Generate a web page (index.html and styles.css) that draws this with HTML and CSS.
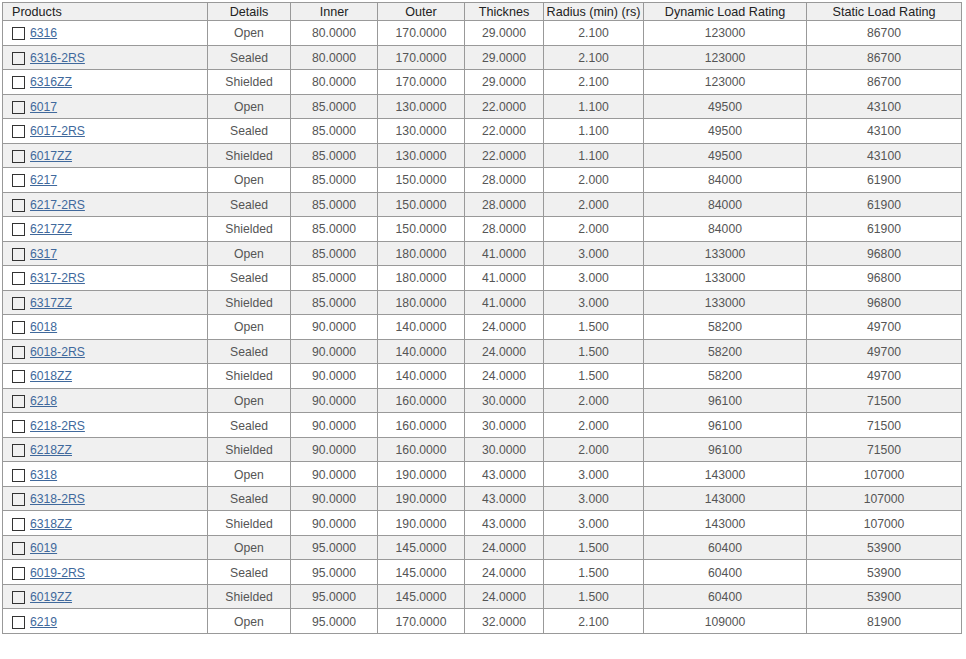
FILE: index.html
```html
<!DOCTYPE html>
<html>
<head>
<meta charset="utf-8">
<link rel="stylesheet" href="styles.css">
</head>
<body>
<table class="grid">
<colgroup>
<col class="c1"><col class="c2"><col class="c3"><col class="c4"><col class="c5"><col class="c6"><col class="c7"><col class="c8">
</colgroup>
<thead>
<tr><th class="left">Products</th><th>Details</th><th>Inner</th><th>Outer</th><th>Thicknes</th><th>Radius (min) (rs)</th><th>Dynamic Load Rating</th><th>Static Load Rating</th></tr>
</thead>
<tbody>
<tr><td class="prod"><span class="cb"></span><a href="#">6316</a></td><td>Open</td><td>80.0000</td><td>170.0000</td><td>29.0000</td><td>2.100</td><td>123000</td><td>86700</td></tr>
<tr><td class="prod"><span class="cb"></span><a href="#">6316-2RS</a></td><td>Sealed</td><td>80.0000</td><td>170.0000</td><td>29.0000</td><td>2.100</td><td>123000</td><td>86700</td></tr>
<tr><td class="prod"><span class="cb"></span><a href="#">6316ZZ</a></td><td>Shielded</td><td>80.0000</td><td>170.0000</td><td>29.0000</td><td>2.100</td><td>123000</td><td>86700</td></tr>
<tr><td class="prod"><span class="cb"></span><a href="#">6017</a></td><td>Open</td><td>85.0000</td><td>130.0000</td><td>22.0000</td><td>1.100</td><td>49500</td><td>43100</td></tr>
<tr><td class="prod"><span class="cb"></span><a href="#">6017-2RS</a></td><td>Sealed</td><td>85.0000</td><td>130.0000</td><td>22.0000</td><td>1.100</td><td>49500</td><td>43100</td></tr>
<tr><td class="prod"><span class="cb"></span><a href="#">6017ZZ</a></td><td>Shielded</td><td>85.0000</td><td>130.0000</td><td>22.0000</td><td>1.100</td><td>49500</td><td>43100</td></tr>
<tr><td class="prod"><span class="cb"></span><a href="#">6217</a></td><td>Open</td><td>85.0000</td><td>150.0000</td><td>28.0000</td><td>2.000</td><td>84000</td><td>61900</td></tr>
<tr><td class="prod"><span class="cb"></span><a href="#">6217-2RS</a></td><td>Sealed</td><td>85.0000</td><td>150.0000</td><td>28.0000</td><td>2.000</td><td>84000</td><td>61900</td></tr>
<tr><td class="prod"><span class="cb"></span><a href="#">6217ZZ</a></td><td>Shielded</td><td>85.0000</td><td>150.0000</td><td>28.0000</td><td>2.000</td><td>84000</td><td>61900</td></tr>
<tr><td class="prod"><span class="cb"></span><a href="#">6317</a></td><td>Open</td><td>85.0000</td><td>180.0000</td><td>41.0000</td><td>3.000</td><td>133000</td><td>96800</td></tr>
<tr><td class="prod"><span class="cb"></span><a href="#">6317-2RS</a></td><td>Sealed</td><td>85.0000</td><td>180.0000</td><td>41.0000</td><td>3.000</td><td>133000</td><td>96800</td></tr>
<tr><td class="prod"><span class="cb"></span><a href="#">6317ZZ</a></td><td>Shielded</td><td>85.0000</td><td>180.0000</td><td>41.0000</td><td>3.000</td><td>133000</td><td>96800</td></tr>
<tr><td class="prod"><span class="cb"></span><a href="#">6018</a></td><td>Open</td><td>90.0000</td><td>140.0000</td><td>24.0000</td><td>1.500</td><td>58200</td><td>49700</td></tr>
<tr><td class="prod"><span class="cb"></span><a href="#">6018-2RS</a></td><td>Sealed</td><td>90.0000</td><td>140.0000</td><td>24.0000</td><td>1.500</td><td>58200</td><td>49700</td></tr>
<tr><td class="prod"><span class="cb"></span><a href="#">6018ZZ</a></td><td>Shielded</td><td>90.0000</td><td>140.0000</td><td>24.0000</td><td>1.500</td><td>58200</td><td>49700</td></tr>
<tr><td class="prod"><span class="cb"></span><a href="#">6218</a></td><td>Open</td><td>90.0000</td><td>160.0000</td><td>30.0000</td><td>2.000</td><td>96100</td><td>71500</td></tr>
<tr><td class="prod"><span class="cb"></span><a href="#">6218-2RS</a></td><td>Sealed</td><td>90.0000</td><td>160.0000</td><td>30.0000</td><td>2.000</td><td>96100</td><td>71500</td></tr>
<tr><td class="prod"><span class="cb"></span><a href="#">6218ZZ</a></td><td>Shielded</td><td>90.0000</td><td>160.0000</td><td>30.0000</td><td>2.000</td><td>96100</td><td>71500</td></tr>
<tr><td class="prod"><span class="cb"></span><a href="#">6318</a></td><td>Open</td><td>90.0000</td><td>190.0000</td><td>43.0000</td><td>3.000</td><td>143000</td><td>107000</td></tr>
<tr><td class="prod"><span class="cb"></span><a href="#">6318-2RS</a></td><td>Sealed</td><td>90.0000</td><td>190.0000</td><td>43.0000</td><td>3.000</td><td>143000</td><td>107000</td></tr>
<tr><td class="prod"><span class="cb"></span><a href="#">6318ZZ</a></td><td>Shielded</td><td>90.0000</td><td>190.0000</td><td>43.0000</td><td>3.000</td><td>143000</td><td>107000</td></tr>
<tr><td class="prod"><span class="cb"></span><a href="#">6019</a></td><td>Open</td><td>95.0000</td><td>145.0000</td><td>24.0000</td><td>1.500</td><td>60400</td><td>53900</td></tr>
<tr><td class="prod"><span class="cb"></span><a href="#">6019-2RS</a></td><td>Sealed</td><td>95.0000</td><td>145.0000</td><td>24.0000</td><td>1.500</td><td>60400</td><td>53900</td></tr>
<tr><td class="prod"><span class="cb"></span><a href="#">6019ZZ</a></td><td>Shielded</td><td>95.0000</td><td>145.0000</td><td>24.0000</td><td>1.500</td><td>60400</td><td>53900</td></tr>
<tr><td class="prod"><span class="cb"></span><a href="#">6219</a></td><td>Open</td><td>95.0000</td><td>170.0000</td><td>32.0000</td><td>2.100</td><td>109000</td><td>81900</td></tr>
</tbody>
</table>
</body>
</html>
```
FILE: styles.css
```css
html, body {
  margin: 0;
  padding: 0;
  background: #fff;
}
body {
  padding: 2px;
  font-family: "Liberation Sans", Arial, sans-serif;
  font-size: 12px;
}
.grid {
  border-collapse: collapse;
  table-layout: fixed;
  width: 960px;
}
.c1 { width: 205px; }
.c2 { width: 83px; }
.c3 { width: 87px; }
.c4 { width: 87px; }
.c5 { width: 79px; }
.c6 { width: 100px; }
.c7 { width: 163px; }
.c8 { width: 155px; }
.grid th, .grid td {
  border: 1px solid #999;
  padding: 0;
  text-align: center;
  white-space: nowrap;
  overflow: hidden;
}
.grid th {
  height: 16px;
  padding-top: 1px;
  font-size: 12.6px;
  font-weight: normal;
  color: #222;
  background: #f0f0f0;
  line-height: 16px;
  vertical-align: top;
}
.grid th.left {
  text-align: left;
  padding-left: 9px;
}
.grid td {
  height: 22.52px;
  padding-top: 1px;
  color: #555;
  font-size: 12.2px;
  line-height: 14px;
  vertical-align: middle;
}
.grid tbody tr:nth-child(even) td {
  background: #f0f0f0;
}
.grid td.prod {
  text-align: left;
  padding-left: 9px;
}
.cb {
  display: inline-block;
  width: 11px;
  height: 11px;
  border: 1px solid #333;
  vertical-align: -3px;
  margin-right: 5px;
}
.grid a {
  color: #40699c;
  text-decoration: underline;
}
```
